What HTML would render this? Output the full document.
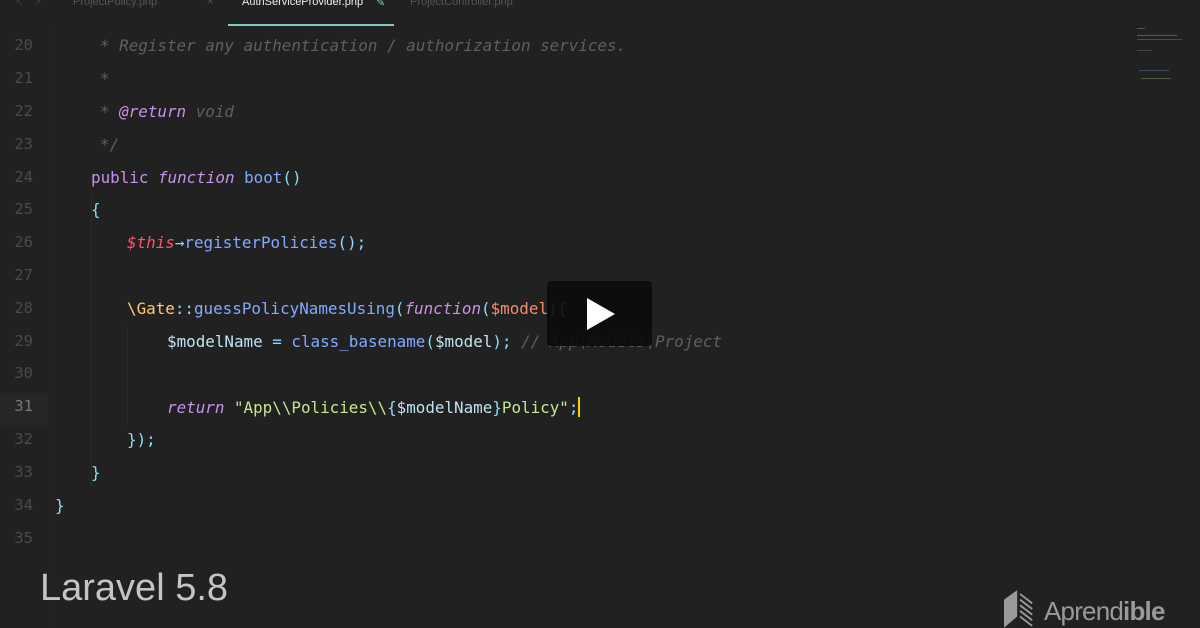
<!DOCTYPE html>
<html><head><meta charset="utf-8"><style>
html,body{margin:0;padding:0;background:#212121;width:1200px;height:628px;overflow:hidden;position:relative}
.tabs{position:absolute;top:0;left:0;width:1200px;height:28px;background:#212121;font-family:"Liberation Sans",sans-serif;font-size:11px;color:#555}
.tabs span{position:absolute;top:-4px}
.ul{position:absolute;left:228px;top:24px;width:166px;height:2px;background:#80cbc4}
.ln{position:absolute;left:0;width:33px;text-align:right;font-family:"DejaVu Sans Mono",monospace;font-size:15.5px;color:#4a4a4a}
.c{position:absolute;font-family:"DejaVu Sans Mono",monospace;font-size:15.9px;white-space:pre;color:#eeffff}
.cm{color:#5f5f5f;font-style:italic}
.kw{color:#c792ea}.it{font-style:italic}
.fn{color:#82aaff}.p{color:#89ddff}.th{color:#ff5370;font-style:italic}
.y{color:#ffcb6b}.o{color:#f78c6c}.v{color:#bfe3f0}.s{color:#c3e88d}
.guide{position:absolute;width:1px;background:#2c2c2c}
.w{position:absolute;left:0;top:1px;width:1200px;height:628px}
</style></head><body>
<div class="tabs">
<span style="left:16px;color:#444">&lt;&nbsp;&nbsp;&nbsp;&nbsp;&gt;</span>
<span style="left:73px">ProjectPolicy.php</span>
<span style="left:207px">×</span>
<span style="left:242px;color:#eee">AuthServiceProvider.php</span>
<span style="left:376px;color:#80cbc4">✎</span>
<span style="left:410px">ProjectController.php</span>
</div>
<div class="ul"></div>
<div class="w">
<div style="position:absolute;left:0;top:392px;width:48px;height:32px;background:#262626"></div>
<div class="guide" style="left:50px;top:28px;height:600px;background:#262626"></div>
<div class="guide" style="left:91px;top:195px;height:290px"></div>
<div class="guide" style="left:127px;top:325px;height:100px"></div>

<div class="ln" style="top:35px">20</div>
<div class="ln" style="top:68px">21</div>
<div class="ln" style="top:101px">22</div>
<div class="ln" style="top:134px">23</div>
<div class="ln" style="top:167px">24</div>
<div class="ln" style="top:199px">25</div>
<div class="ln" style="top:232px">26</div>
<div class="ln" style="top:265px">27</div>
<div class="ln" style="top:298px">28</div>
<div class="ln" style="top:331px">29</div>
<div class="ln" style="top:363px">30</div>
<div class="ln" style="top:396px;color:#777">31</div>
<div class="ln" style="top:429px">32</div>
<div class="ln" style="top:462px">33</div>
<div class="ln" style="top:495px">34</div>
<div class="ln" style="top:528px">35</div>

<div class="c cm" style="left:100px;top:35px">* Register any authentication / authorization services.</div>
<div class="c cm" style="left:100px;top:68px">*</div>
<div class="c cm" style="left:100px;top:101px">* <span class="kw" style="font-style:italic">@return</span> void</div>
<div class="c cm" style="left:100px;top:134px">*/</div>
<div class="c" style="left:91px;top:167px"><span class="kw">public</span> <span class="kw it">function</span> <span class="fn">boot</span><span class="p">()</span></div>
<div class="c p" style="left:91px;top:199px">{</div>
<div class="c" style="left:127px;top:232px"><span class="th">$this</span><span class="p">→</span><span class="fn">registerPolicies</span><span class="p">();</span></div>
<div class="c" style="left:127px;top:298px"><span class="y">\Gate</span><span class="p">::</span><span class="fn">guessPolicyNamesUsing</span><span class="p">(</span><span class="kw it">function</span><span class="p">(</span><span class="o">$model</span><span class="p">){</span></div>
<div class="c" style="left:167px;top:331px"><span class="v">$modelName</span> <span class="p">=</span> <span class="fn">class_basename</span><span class="p">(</span><span class="v">$model</span><span class="p">);</span> <span class="cm">// App\Models\Project</span></div>
<div class="c" style="left:167px;top:396px"><span class="kw it">return</span> <span class="s">"App\\Policies\\</span><span class="p">{</span><span class="v">$modelName</span><span class="p">}</span><span class="s">Policy"</span><span class="p">;</span><span style="display:inline-block;width:2px;height:20px;background:#ffcc00;vertical-align:-4px"></span></div>
<div class="c p" style="left:127px;top:429px">});</div>
<div class="c p" style="left:91px;top:462px">}</div>
<div class="c p" style="left:55px;top:495px">}</div>
</div>

<div style="position:absolute;left:547px;top:281px;width:105px;height:65px;background:rgba(12,12,12,0.92);border-radius:4px"></div>
<div style="position:absolute;left:587px;top:298px;width:0;height:0;border-left:28px solid #fff;border-top:16px solid transparent;border-bottom:16px solid transparent"></div>

<div style="position:absolute;left:1137px;top:28px;width:50px;height:60px">
<div style="position:absolute;left:0;top:0;width:8px;height:1px;background:#555"></div>
<div style="position:absolute;left:0;top:7px;width:40px;height:1px;background:#6a5a30"></div>
<div style="position:absolute;left:0;top:11px;width:45px;height:1px;background:#4a4a4a"></div>
<div style="position:absolute;left:0;top:22px;width:15px;height:1px;background:#444"></div>
<div style="position:absolute;left:2px;top:42px;width:30px;height:1px;background:#3c4a60"></div>
<div style="position:absolute;left:4px;top:50px;width:30px;height:1px;background:#4a5a40"></div>
</div>

<div style="position:absolute;left:40px;top:567px;font-family:'Liberation Sans',sans-serif;font-size:38px;color:#c4c4c4">Laravel 5.8</div>

<svg style="position:absolute;left:1004px;top:590px" width="32" height="38" viewBox="0 0 34 40">
<polygon points="0,10 14,0 14,28 0,40" fill="#9a9a9a"/>
<g stroke="#9a9a9a" stroke-width="2"><line x1="17" y1="4" x2="30" y2="14"/><line x1="17" y1="10" x2="30" y2="20"/><line x1="17" y1="16" x2="30" y2="26"/><line x1="17" y1="22" x2="30" y2="32"/><line x1="17" y1="28" x2="30" y2="38"/></g>
</svg>
<div style="position:absolute;left:1044px;top:596px;font-family:'Liberation Sans',sans-serif;font-size:26px;color:#9a9a9a;letter-spacing:-0.8px"><span style="font-weight:300">Aprend</span><span style="font-weight:bold">ible</span></div>
</body></html>
